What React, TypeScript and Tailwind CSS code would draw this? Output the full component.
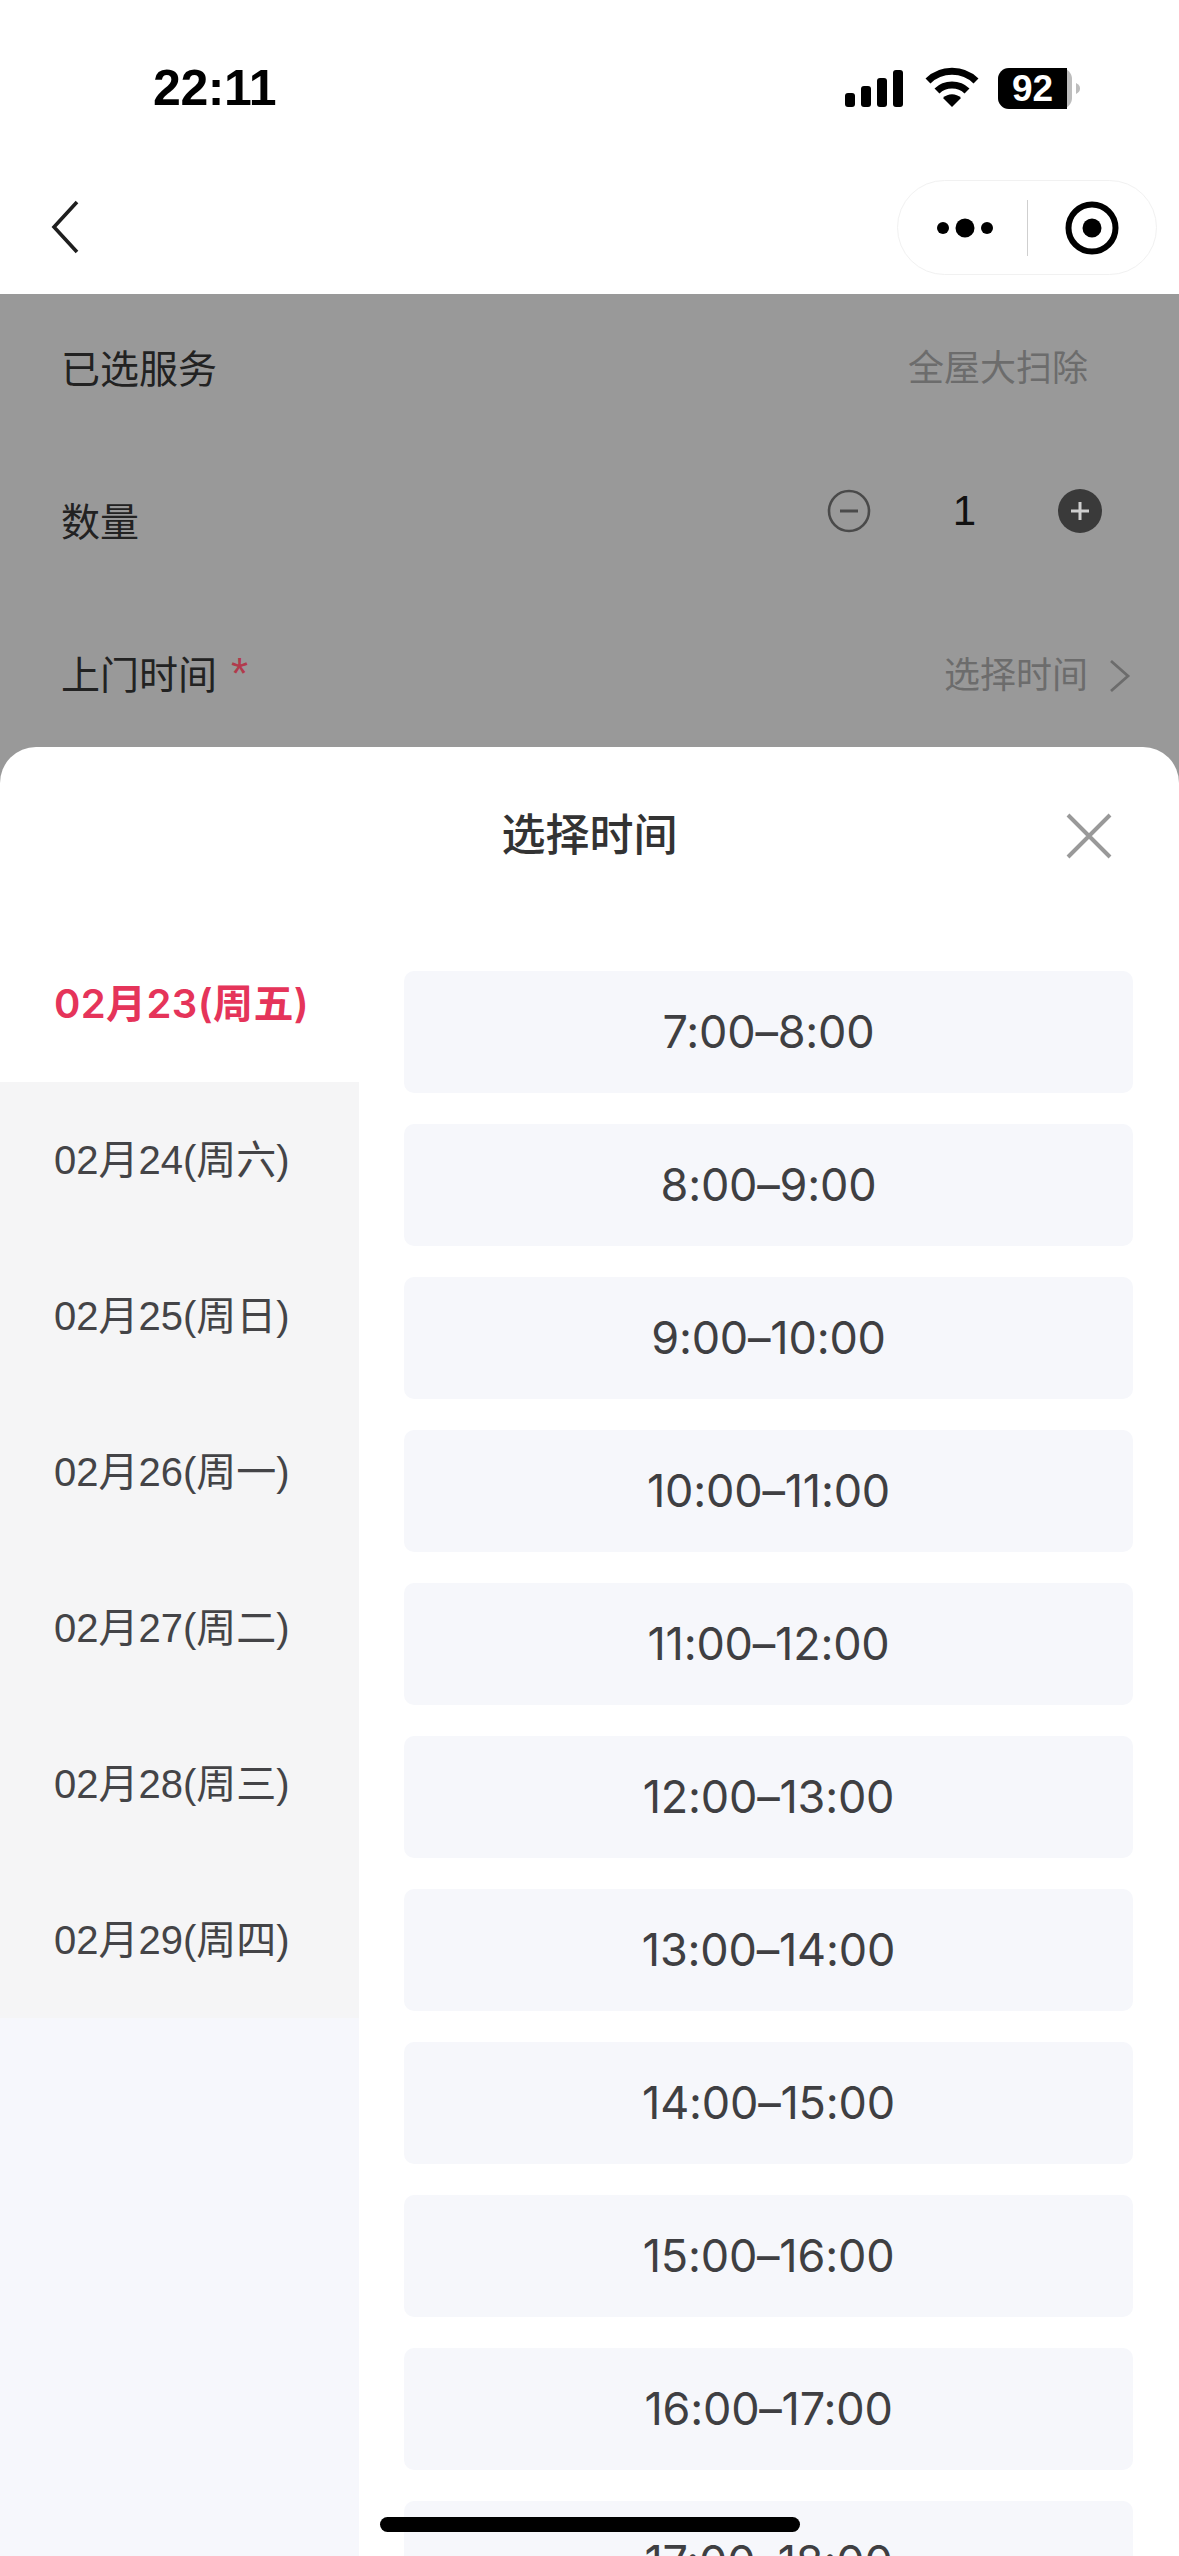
const FONT = "font-['Liberation_Sans','Noto_Sans_CJK_SC',sans-serif]";

const dates = ["02月24(周六)", "02月25(周日)", "02月26(周一)", "02月27(周二)", "02月28(周三)", "02月29(周四)"];
const times = ["7:00–8:00", "8:00–9:00", "9:00–10:00", "10:00–11:00", "11:00–12:00", "12:00–13:00", "13:00–14:00", "14:00–15:00", "15:00–16:00", "16:00–17:00", "17:00–18:00"];

function StatusIcons() {
  return (
    <svg width="240" height="50" viewBox="0 0 240 50" className="block">
      <rect x="4" y="28" width="10" height="14" rx="3" fill="#000" />
      <rect x="20" y="21" width="10" height="21" rx="3" fill="#000" />
      <rect x="36" y="13" width="10" height="29" rx="3" fill="#000" />
      <rect x="52" y="5" width="10" height="37" rx="3" fill="#000" />
      <path d="M87 16 C100 3 122 3 135 16" fill="none" stroke="#000" strokeWidth="7" />
      <path d="M96 26 C104 18 118 18 126 26" fill="none" stroke="#000" strokeWidth="7" />
      <path d="M102 33 C107 28 115 28 120 33 L111 42 Z" fill="#000" />
      <rect x="157" y="3" width="74" height="41" rx="11" fill="#bdbdbd" />
      <path d="M168 3 H226 V44 H168 A11 11 0 0 1 157 33 V14 A11 11 0 0 1 168 3 Z" fill="#000" />
      <path d="M235 18 C238 20 239 21 239 23.5 C239 26 238 27 235 29 Z" fill="#bdbdbd" />
    </svg>
  );
}

function Capsule() {
  return (
    <div className="w-[260px] h-[95px] rounded-[48px] border border-[#f1f1f1] bg-white flex items-center">
      <div className="w-[129px] flex justify-center pl-[6px]">
        <svg width="70" height="20" viewBox="0 0 70 20">
          <circle cx="12" cy="10" r="6" fill="#000" />
          <circle cx="34" cy="10" r="9.5" fill="#000" />
          <circle cx="56" cy="10" r="6" fill="#000" />
        </svg>
      </div>
      <div className="w-px h-[56px] bg-[#cfcfcf]" />
      <div className="flex-1 flex justify-center">
        <svg width="54" height="54" viewBox="0 0 54 54">
          <circle cx="27" cy="27" r="23.5" fill="none" stroke="#000" strokeWidth="6" />
          <circle cx="27" cy="27" r="9.5" fill="#000" />
        </svg>
      </div>
    </div>
  );
}

export default function App() {
  return (
    <div className={`relative w-[1179px] h-[2556px] overflow-hidden bg-white flex flex-col ${FONT}`}>
      {/* status bar */}
      <div className="h-[176px] shrink-0 flex items-start justify-between pl-[153px] pr-[98px] pt-[58px]">
        <span className="text-[50px] leading-[60px] font-bold tracking-[-0.4px] text-black">22:11</span>
        <div className="relative mt-[7px]">
          <StatusIcons />
          <span className="absolute left-[157px] top-[3px] w-[69px] h-[41px] flex items-center justify-center text-[37px] font-bold text-white leading-none">92</span>
        </div>
      </div>

      {/* nav bar */}
      <div className="h-[118px] shrink-0 flex items-start justify-between pl-[50px] pr-[22px] pt-[4px]">
        <svg width="30" height="54" viewBox="0 0 30 54" className="mt-[20px]">
          <path d="M27 2 L4 27 L27 52" fill="none" stroke="#1f1f1f" strokeWidth="3.6" />
        </svg>
        <Capsule />
      </div>

      {/* dimmed form: runs on behind the sheet's rounded corners */}
      <div className="h-[493px] shrink-0 bg-[#999999] pl-[61px] pr-[49px]">
        <div className="h-[153px] flex items-center justify-between">
          <span className="text-[39px] text-[#222222]">已选服务</span>
          <span className="text-[36px] text-[#6c6c6c] mb-[4px] mr-[42px] -ml-px">全屋大扫除</span>
        </div>
        <div className="h-[153px] flex items-center justify-between">
          <span className="text-[39px] text-[#222222]">数量</span>
          <div className="flex items-center mb-[26px] mr-[1px]">
            <svg width="44" height="44" viewBox="0 0 44 44">
              <circle cx="22" cy="22" r="20" fill="none" stroke="#4a4a4a" strokeWidth="2.6" />
              <path d="M13 22 H31" stroke="#4a4a4a" strokeWidth="3" />
            </svg>
            <span className="w-[187px] text-center text-[42px] leading-none text-[#111111]">1</span>
            <svg width="44" height="44" viewBox="0 0 44 44">
              <circle cx="22" cy="22" r="22" fill="#3a3a3a" />
              <path d="M13 22 H31 M22 13 V31" stroke="#cfcfcf" strokeWidth="3" />
            </svg>
            <span className="w-[27px]" />
          </div>
        </div>
        <div className="h-[147px] flex items-start justify-between pt-[53px]">
          <span className="text-[39px] leading-[46px] text-[#222222] flex items-start">
            上门时间
            <span className="ml-[14px] mt-[-2px] text-[44px] leading-[46px] text-[#b23a4c]">*</span>
          </span>
          <span className="flex items-center -mr-[2px]">
            <span className="text-[36px] leading-[46px] text-[#6c6c6c] ml-[2px]">选择时间</span>
            <svg width="24" height="34" viewBox="0 0 24 34" className="ml-[20px]">
              <path d="M3 2 L20 17 L3 32" fill="none" stroke="#6c6c6c" strokeWidth="2.8" />
            </svg>
          </span>
        </div>
      </div>

      {/* sheet */}
      <div className="flex-1 min-h-0 -mt-[40px] bg-white rounded-t-[36px] flex flex-col overflow-hidden">
        <div className="relative h-[179px] shrink-0 flex justify-center pt-[61px]">
          <span className="text-[44px] leading-[56px] font-medium text-[#333333]">选择时间</span>
          <svg width="46" height="46" viewBox="0 0 46 46" className="absolute left-[1066px] top-[66px]">
            <path d="M2 2 L44 44 M44 2 L2 44" fill="none" stroke="#999999" strokeWidth="4" />
          </svg>
        </div>
        <div className="flex-1 min-h-0 flex">
          <div className="w-[359px] shrink-0 bg-[#f6f7fc] flex flex-col">
            <div className="h-[156px] bg-white pl-[54px] pt-[54px]">
              <span className="font-['Inter','Noto_Sans_CJK_SC',sans-serif] text-[40px] leading-[48px] font-semibold tracking-[0.4px] text-[#e5345a] block">02月23(周五)</span>
            </div>
            {dates.map((d) => (
              <div key={d} className="h-[156px] bg-[#f5f5f6] pl-[54px] pt-[54px]">
                <span className="text-[40px] leading-[48px] text-[#444447] block">{d}</span>
              </div>
            ))}
          </div>
          <div className="flex-1 min-w-0 overflow-hidden pl-[45px] pr-[46px] pt-[45px] flex flex-col gap-[31px]">
            {times.map((t) => (
              <div key={t} className="h-[122px] shrink-0 rounded-[10px] bg-[#f6f7fb] flex items-center justify-center font-['Inter',sans-serif] text-[45px] font-normal tracking-[-0.2px] text-[#3f3f42]">
                {t}
              </div>
            ))}
          </div>
        </div>
      </div>

      {/* home indicator */}
      <div className="absolute left-[380px] top-[2517px] w-[420px] h-[15px] rounded-full bg-black" />
    </div>
  );
}
